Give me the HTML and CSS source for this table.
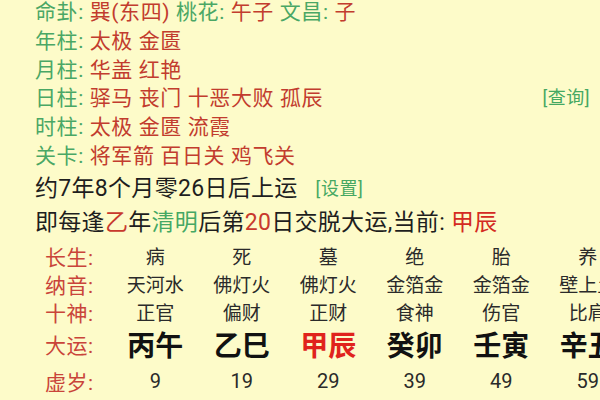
FILE: index.html
```html
<!DOCTYPE html>
<html lang="zh-CN">
<head>
<meta charset="utf-8">
<link rel="stylesheet" href="styles.css">
</head>
<body>
<div class="page">
  <div class="info">
    <div class="line"><span class="k">命卦: </span><span class="v">巽(东四)</span> <span class="k">桃花: </span><span class="v">午子</span> <span class="k">文昌: </span><span class="v">子</span></div>
    <div class="line"><span class="k">年柱: </span><span class="v">太极 金匮</span></div>
    <div class="line"><span class="k">月柱: </span><span class="v">华盖 红艳</span></div>
    <div class="line split"><span><span class="k">日柱: </span><span class="v">驿马 丧门 十恶大败 孤辰</span></span><span class="link">[查询]</span></div>
    <div class="line"><span class="k">时柱: </span><span class="v">太极 金匮 流霞</span></div>
    <div class="line"><span class="k">关卡: </span><span class="v">将军箭 百日关 鸡飞关</span></div>
  </div>
  <div class="yun">
    <div class="yline">约7年8个月零26日后上运<span class="link set">[设置]</span></div>
    <div class="yline">即每逢<span class="r">乙</span>年<span class="g">清明</span>后第<span class="r">20</span>日交脱大运,当前: <span class="r2">甲辰</span></div>
  </div>
  <div class="table">
    <div class="lab">长生:</div>
    <div class="c">病</div><div class="c">死</div><div class="c">墓</div><div class="c">绝</div><div class="c">胎</div><div class="c">养</div>
    <div class="lab">纳音:</div>
    <div class="c">天河水</div><div class="c">佛灯火</div><div class="c">佛灯火</div><div class="c">金箔金</div><div class="c">金箔金</div><div class="c">壁上土</div>
    <div class="lab">十神:</div>
    <div class="c">正官</div><div class="c">偏财</div><div class="c">正财</div><div class="c">食神</div><div class="c">伤官</div><div class="c">比肩</div>
    <div class="lab">大运:</div>
    <div class="c big">丙午</div><div class="c big">乙巳</div><div class="c big cur">甲辰</div><div class="c big">癸卯</div><div class="c big">壬寅</div><div class="c big">辛丑</div>
    <div class="lab">虚岁:</div>
    <div class="c num">9</div><div class="c num">19</div><div class="c num">29</div><div class="c num">39</div><div class="c num">49</div><div class="c num">59</div>
  </div>
</div>
</body>
</html>
```
FILE: styles.css
```css
html, body {
  margin: 0;
  padding: 0;
  background: #fdfbc9;
}
body {
  width: 600px;
  height: 400px;
  overflow: hidden;
  font-family: Roboto, "Noto Sans CJK SC", sans-serif;
  color: #222;
}
.info {
  padding-left: 35px;
  padding-right: 10px;
  margin-top: -2px;
}
.line {
  font-size: 21px;
  letter-spacing: 0.6px;
  line-height: 28.8px;
  height: 28.8px;
  white-space: nowrap;
}
.split {
  display: flex;
  justify-content: space-between;
  align-items: center;
}
.k { color: #4aa765; }
.v { color: #c23c2e; }
.link {
  color: #45a862;
  font-size: 18px;
  letter-spacing: 0.5px;
}
.yun {
  padding-left: 35px;
  margin-top: 1px;
}
.yline {
  font-size: 23px;
  letter-spacing: 0.3px;
  line-height: 34px;
  height: 34px;
  white-space: nowrap;
  color: #1e1e1e;
}
.set { margin-left: 18px; vertical-align: 1px; }
.r { color: #c8392d; }
.g { color: #44a864; }
.r2 { color: #d42a22; }
.table {
  display: grid;
  grid-template-columns: 67px repeat(6, 86.5px);
  grid-template-rows: 28px 28px 28px 36px 38px;
  padding-left: 45px;
  margin-top: 2px;
  white-space: nowrap;
}
.lab {
  color: #c9443a;
  font-size: 21px;
  letter-spacing: 0.5px;
  display: flex;
  align-items: center;
}
.c {
  font-size: 19px;
  color: #2a2a2a;
  display: flex;
  align-items: center;
  justify-content: center;
}
.big {
  font-size: 28px;
  font-weight: 700;
  color: #111;
}
.big.cur { color: #e0231c; }
.num { font-size: 20px; }
```
